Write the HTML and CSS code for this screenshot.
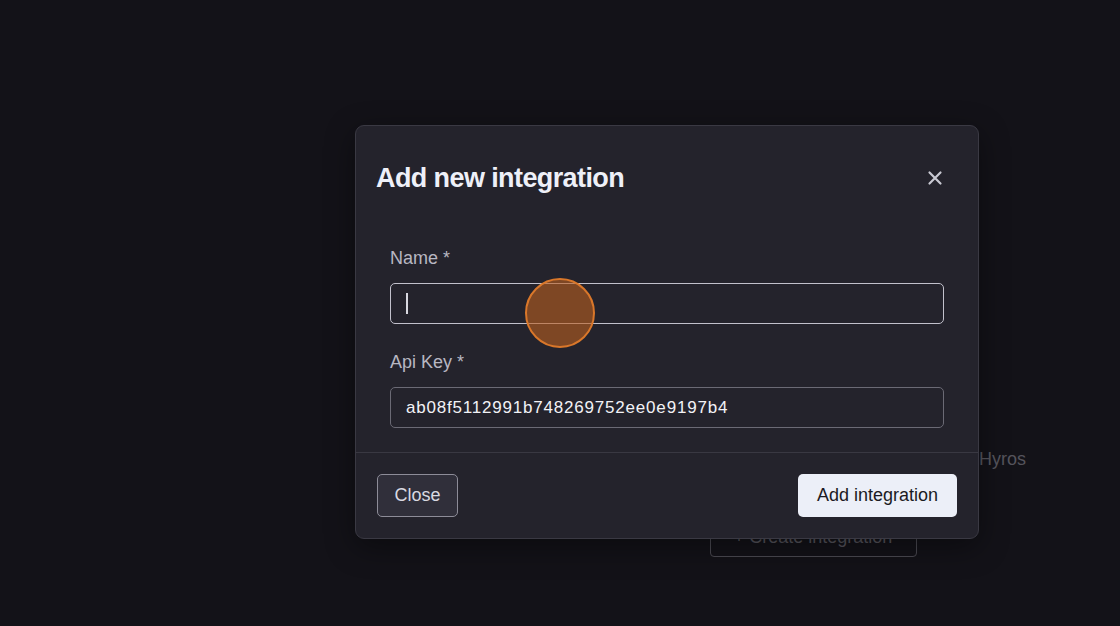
FILE: index.html
```html
<!DOCTYPE html>
<html lang="en">

<head>
    <meta charset="UTF-8">
    <meta name="viewport" content="width=device-width, initial-scale=1.0">
    <title>Integrations</title>
    <link rel="stylesheet" href="styles.css">
</head>

<body>
    <main class="page">
        <div class="empty-state">
            <h2 class="empty-title">No integrations connected</h2>
            <p class="empty-text">Add an integration to start sending your data to Hyros</p>
            <button class="create-button">+ Create integration</button>
        </div>
    </main>

    <div class="overlay">
        <div class="modal">
            <div class="modal-header">
                <h1 class="modal-title">Add new integration</h1>
                <button class="close-icon" aria-label="Close">
                    <svg width="16" height="16" viewBox="0 0 16 16" fill="none">
                        <path d="M2.5 2.5 L13.5 13.5 M13.5 2.5 L2.5 13.5" stroke="#c9c9d3" stroke-width="2.2" stroke-linecap="round" />
                    </svg>
                </button>
            </div>
            <div class="modal-body">
                <label class="field-label">Name *</label>
                <div class="field-input focused"><span class="caret"></span></div>
                <label class="field-label second">Api Key *</label>
                <div class="field-input">ab08f5112991b748269752ee0e9197b4</div>
            </div>
            <div class="modal-footer">
                <button class="btn btn-close">Close</button>
                <button class="btn btn-primary">Add integration</button>
            </div>
        </div>
    </div>

    <div class="click-dot"></div>
</body>

</html>
```

FILE: styles.css
```css
* {
    margin: 0;
    padding: 0;
    box-sizing: border-box;
    font-family: 'Liberation Sans', Arial, sans-serif;
}

body {
    width: 1120px;
    height: 626px;
    overflow: hidden;
    background: #131218;
    position: relative;
}

.page {
    height: 626px;
    padding-left: 506px;
    padding-top: 396px;
}

.empty-state {
    display: flex;
    flex-direction: column;
    align-items: center;
}

.empty-title {
    font-size: 26.5px;
    font-weight: bold;
    color: #5c5b63;
    line-height: 34px;
}

.empty-text {
    font-size: 18px;
    color: #55545c;
    margin-top: 18px;
    line-height: 22px;
}

.create-button {
    margin-top: 47px;
    width: 207px;
    height: 40px;
    background: transparent;
    border: 1.5px solid #4a4951;
    border-radius: 4px;
    color: #55545c;
    font-size: 18px;
}

.overlay {
    position: absolute;
    inset: 0;
    padding: 125px 0 0 355px;
}

.modal {
    width: 624px;
    background: #24232c;
    border: 1px solid #3a3943;
    border-radius: 9px;
    box-shadow: 0 8px 30px rgba(0, 0, 0, 0.4);
}

.modal-header {
    display: flex;
    justify-content: space-between;
    align-items: center;
    padding: 35px 35px 0 20px;
}

.modal-title {
    font-size: 27px;
    font-weight: bold;
    line-height: 34px;
    letter-spacing: -0.6px;
    color: #eef0f8;
}

.close-icon {
    display: flex;
    background: none;
    border: none;
    cursor: pointer;
}

.modal-body {
    display: flex;
    flex-direction: column;
    padding: 52px 34px 24px 34px;
}

.field-label {
    font-size: 18px;
    line-height: 22px;
    color: #b8b7c2;
    margin-bottom: 14px;
}

.field-label.second {
    margin-top: 27px;
}

.field-input {
    height: 41px;
    border: 1.5px solid #6b6a75;
    border-radius: 5px;
    display: flex;
    align-items: center;
    padding: 0 15px;
    font-size: 17px;
    letter-spacing: 0.8px;
    color: #f2f2f6;
}

.field-input.focused {
    border-color: #c2c1cc;
}

.caret {
    width: 2px;
    height: 21px;
    background: #d8d8e0;
}

.modal-footer {
    display: flex;
    justify-content: space-between;
    padding: 21px 21px 21px 21px;
    border-top: 1px solid #393842;
}

.btn {
    height: 43px;
    border-radius: 5px;
    font-size: 18px;
    cursor: pointer;
}

.btn-close {
    width: 81px;
    background: #302f3a;
    border: 1.5px solid #8d8c98;
    color: #d9d9e1;
}

.btn-primary {
    width: 159px;
    background: #eceff8;
    border: none;
    color: #1b1a22;
}

.click-dot {
    position: absolute;
    left: 525px;
    top: 278px;
    width: 70px;
    height: 70px;
    border-radius: 50%;
    background: rgba(186, 95, 32, 0.6);
    border: 2.5px solid #d9772a;
}
```
